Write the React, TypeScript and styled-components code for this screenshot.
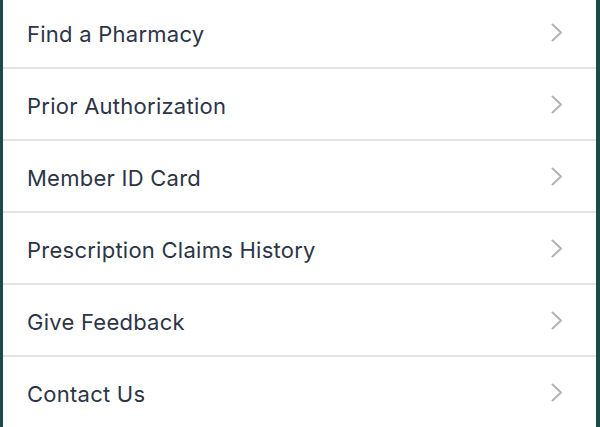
import React from "react";
import styled, { createGlobalStyle } from "styled-components";

const GlobalStyle = createGlobalStyle`
  html, body {
    margin: 0;
    padding: 0;
    background: #ffffff;
    overflow: hidden;
  }
  body {
    font-family: Inter, "Noto Sans", "Liberation Sans", sans-serif;
  }
`;

const Frame = styled.div`
  width: 600px;
  height: 427px;
  box-sizing: border-box;
  border-left: 3px solid #1c4a46;
  border-right: 4px solid #1c4a46;
  background: #ffffff;
  overflow: hidden;
`;

const List = styled.ul`
  list-style: none;
  margin: -3px 0 0 0;
  padding: 0;
  display: flex;
  flex-direction: column;
`;

const Row = styled.li`
  height: 67px;
  display: flex;
  align-items: center;
  justify-content: space-between;
  padding: 3px 33px 0 24px;
  box-sizing: content-box;
  border-bottom: 2px solid #e4e4e4;
  cursor: pointer;
`;

const Label = styled.span`
  font-size: 22px;
  line-height: 1;
  color: #2c3547;
  letter-spacing: 0.25px;
`;

const Chevron = styled.svg`
  width: 12px;
  height: 19px;
  flex: none;
  margin-top: -2px;
`;

const items = [
  "Find a Pharmacy",
  "Prior Authorization",
  "Member ID Card",
  "Prescription Claims History",
  "Give Feedback",
  "Contact Us",
];

export default function App() {
  return (
    <>
      <GlobalStyle />
      <Frame>
        <List>
          {items.map((label) => (
            <Row key={label}>
              <Label>{label}</Label>
              <Chevron viewBox="0 0 12 19" fill="none">
                <polyline
                  points="1.5,1.5 10,9.5 1.5,17.5"
                  stroke="#b3b3b3"
                  strokeWidth="2"
                  strokeLinecap="round"
                  strokeLinejoin="round"
                />
              </Chevron>
            </Row>
          ))}
        </List>
      </Frame>
    </>
  );
}
